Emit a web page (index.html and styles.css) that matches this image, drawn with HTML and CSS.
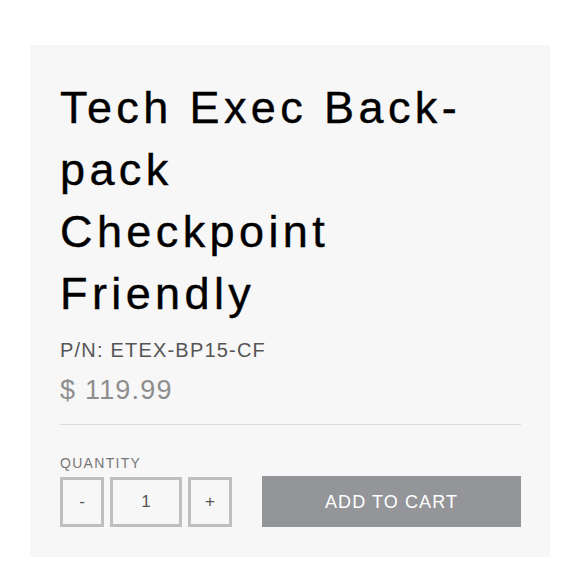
FILE: index.html
```html
<!DOCTYPE html>
<html>
<head>
    <title>Tech Exec Backpack Checkpoint Friendly</title>
    <meta name="viewport" content="width=device-width, initial-scale=1">
    <link rel="stylesheet" href="styles.css">
</head>
<body>
<div class="product-wrapper">
    <div class="product-card">
        <h1 class="product-title">Tech Exec Back-<br>pack<br>Checkpoint<br>Friendly</h1>
        <p class="part-number">P/N: ETEX-BP15-CF</p>
        <p class="price">$ 119.99</p>
        <hr class="divider">

        <div class="quantity-label">QUANTITY</div>
        <div class="buy-row">
            <button class="qty-button">-</button>
            <div class="qty-value">1</div>
            <button class="qty-button">+</button>
            <button class="add-to-cart">ADD TO CART</button>
        </div>
    </div>
</div>
</body>
</html>
```

FILE: styles.css
```css
body {
    margin: 0;
    background-color: #ffffff;
    font-family: 'Liberation Sans', Arial, sans-serif;
}

.product-wrapper {
    padding: 45px 30px 0 30px;
}

.product-card {
    box-sizing: border-box;
    height: 512px;
    background-color: #f7f7f7;
    padding: 32px 29px 30px 30px;
}

.product-title {
    margin: 0 0 11px 0;
    font-size: 45px;
    font-weight: normal;
    line-height: 62px;
    letter-spacing: 4.4px;
    color: #000000;
    -webkit-text-stroke: 0.4px #000000;
}

.part-number {
    margin: 0;
    font-size: 20px;
    line-height: 28px;
    letter-spacing: 1.2px;
    color: #555555;
}

.price {
    margin: 8px 0 0 0;
    font-size: 27px;
    line-height: 36px;
    letter-spacing: 1.2px;
    color: #8e8e8e;
}

.divider {
    border: 0;
    border-top: 1px solid #dddddd;
    margin: 16px 0 0 0;
}

.quantity-label {
    margin-top: 29px;
    font-size: 14px;
    line-height: 18px;
    letter-spacing: 1.3px;
    color: #777777;
}

.buy-row {
    display: flex;
    align-items: flex-end;
    gap: 6px;
    margin-top: 4px;
}

.qty-button,
.qty-value {
    box-sizing: border-box;
    display: flex;
    align-items: center;
    justify-content: center;
    width: 44px;
    height: 50px;
    margin: 0;
    padding: 0;
    border: 3px solid #bfbfbf;
    background-color: transparent;
    font-family: 'Liberation Sans', Arial, sans-serif;
    font-size: 17px;
    color: #555555;
}

.qty-value {
    width: 72px;
}

.add-to-cart {
    flex: 1;
    height: 51px;
    margin: 0 0 0 24px;
    padding-top: 2px;
    border: 0;
    background-color: #939598;
    color: #ffffff;
    font-family: 'Liberation Sans', Arial, sans-serif;
    font-size: 18px;
    letter-spacing: 1.1px;
    cursor: pointer;
}
```
